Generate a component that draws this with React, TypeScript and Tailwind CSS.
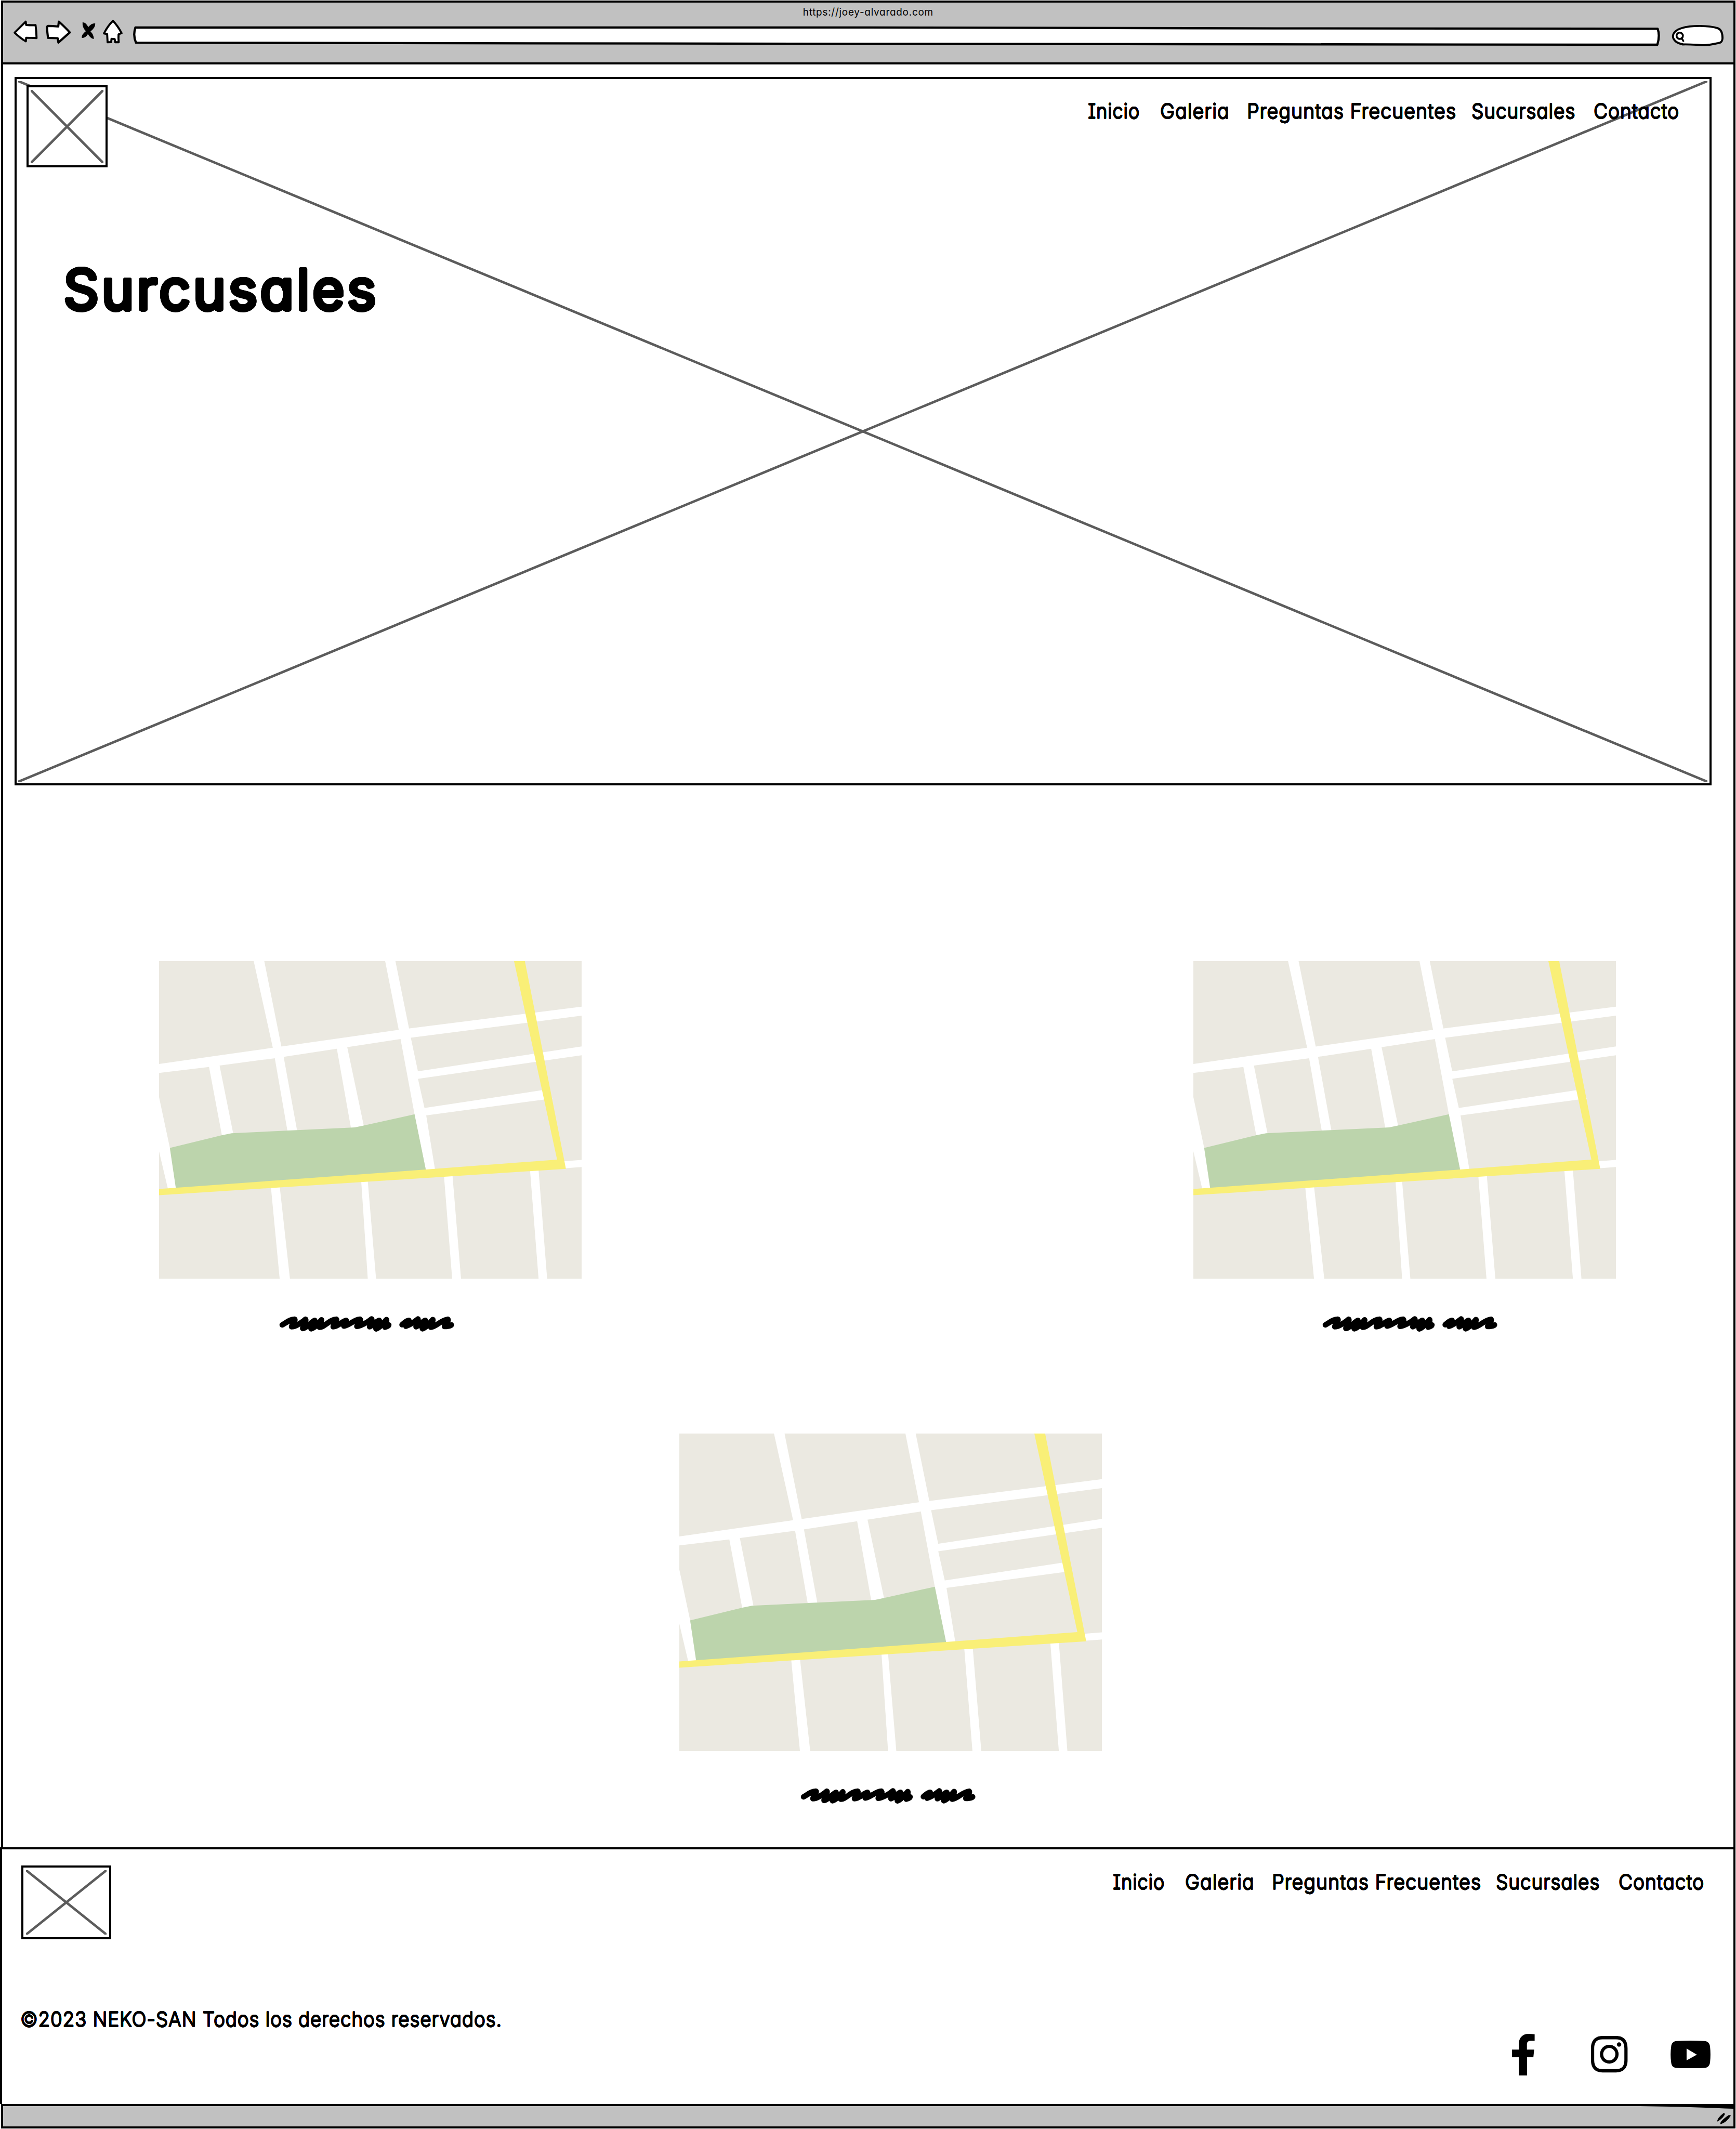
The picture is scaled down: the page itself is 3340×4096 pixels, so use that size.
import { useLayoutEffect, useRef, useState } from "react";
import type { ReactNode } from "react";

/* Soft outline of the given radius, which rounds the ends of the letter strokes. */
function roundShadow(radius: number) {
  const steps = 24;
  return Array.from({ length: steps }, (_, i) => {
    const a = (i / steps) * Math.PI * 2;
    return `${(Math.cos(a) * radius).toFixed(2)}px ${(Math.sin(a) * radius).toFixed(2)}px 0 #000`;
  }).join(",");
}

type FitProps = {
  width: number;
  bearing: number;
  tracking?: number;
  round?: number;
  className: string;
  children: ReactNode;
};

/* A single line of text, condensed to the given width. */
function FitText({ width, bearing, tracking = 0, round = 0, className, children }: FitProps) {
  const ref = useRef<HTMLSpanElement>(null);
  const [scale, setScale] = useState(1);
  useLayoutEffect(() => {
    if (ref.current) setScale(width / (ref.current.offsetWidth - bearing * 2 - tracking));
  }, [width, bearing, tracking]);
  return (
    <span className="block shrink-0 leading-none" style={{ width }}>
      <span
        ref={ref}
        className={`inline-block origin-left whitespace-nowrap align-top leading-none ${className}`}
        style={{
          letterSpacing: tracking,
          transform: `translateX(${-bearing * scale}px) scaleX(${scale})`,
          textShadow: round ? roundShadow(round) : undefined,
        }}
      >
        {children}
      </span>
    </span>
  );
}

function Cross({ className }: { className: string }) {
  return (
    <svg className={className} viewBox="0 0 100 100" preserveAspectRatio="none" fill="none" stroke="#5c5c5c" strokeWidth="4.8">
      <path d="M0 0L100 100" vectorEffect="non-scaling-stroke" />
      <path d="M100 0L0 100" vectorEffect="non-scaling-stroke" />
    </svg>
  );
}

const links = [
  { label: "Inicio", width: 95, gap: "mr-[44px]" },
  { label: "Galeria", width: 128.6, gap: "mr-[38.3px]" },
  { label: "Preguntas Frecuentes", width: 398.6, gap: "mr-[32.8px]" },
  { label: "Sucursales", width: 195.7, gap: "mr-[39.9px]" },
  { label: "Contacto", width: 159.8, gap: "" },
];

function Nav({ className }: { className: string }) {
  return (
    <nav className={`flex ${className}`}>
      {links.map((l) => (
        <a key={l.label} className={l.gap}>
          <FitText width={l.width} bearing={2} tracking={1} round={0.6} className="text-[39px] font-light">
            {l.label}
          </FitText>
        </a>
      ))}
    </nav>
  );
}

function Toolbar() {
  return (
    <header className="ml-[2px] mt-[1px] flex h-[123px] w-[3336.5px] shrink-0 flex-col border-4 border-black bg-[#c1c1c1]">
      <div className="flex h-[31px] justify-center pr-[1px] pt-[7.5px]">
        <FitText width={248} bearing={1.3} tracking={0.8} className="text-[20px]">
          https://joey-alvarado.com
        </FitText>
      </div>
      <div className="flex items-start pl-[19px]">
        <svg className="h-[50px] w-[49px]" viewBox="90 130 176 180" fill="#fff" stroke="#000" strokeWidth="14" strokeLinejoin="round">
          <path d="M101 227L178 150L181 173Q220 176 246 174Q252 215 253 264Q215 262 181 262L179 287Q140 265 101 227Z" />
        </svg>
        <svg className="ml-[12.8px] h-[50px] w-[50.7px]" viewBox="312 130 182 180" fill="#fff" stroke="#000" strokeWidth="15" strokeLinejoin="round">
          <path d="M330 180Q365 180 402 184L406 150Q450 190 482 225L403 295L398 265L331 263Q326 225 324 186Z" />
        </svg>
        <svg className="ml-[18.4px] h-[50px] w-[29px]" viewBox="560 130 104 180">
          <path d="M570 155Q592 154 610 188Q634 158 658 163Q660 190 625 218Q648 240 648 270Q630 271 607 237Q588 266 565 263Q561 240 593 216Q567 192 570 155Z" />
        </svg>
        <svg className="ml-[12.2px] h-[50px] w-[40px]" viewBox="708 130 144 180" fill="#fff" stroke="#000" strokeWidth="14" strokeLinejoin="round">
          <path d="M781 145Q815 180 841 230L820 238Q818 265 821 293L797 293L793 271L771 269L769 292L744 293L741 237L719 232Q745 180 781 145Z" />
        </svg>
        <svg className="ml-[19px] mt-[14px] h-[38px] w-[2937px] shrink-0 overflow-visible" viewBox="0 0 2938 38" preserveAspectRatio="none" fill="#fff" stroke="#000" strokeWidth="4.3" strokeLinejoin="round">
          <path d="M4.5 3L1414 2.9L2200 4.6L2934.3 5.4Q2939 18 2933.7 36L1414 34.3L5.6 32.1Q-.5 18 4.5 3Z" />
        </svg>
        <svg className="ml-[22px] mt-[10px] h-[44.5px] w-[103px] shrink-0" viewBox="460 165 370 160" fill="#fff" stroke="#000" strokeWidth="14" strokeLinejoin="round" strokeLinecap="round">
          <path d="M540 305C505 300 473 280 473 249C478 195 570 179 660 179C710 180 755 185 784 195C808 205 816 235 816 263C815 280 810 290 800 294C760 305 730 312 680 312C630 310 590 305 540 307Z" />
          <circle cx="520" cy="247" r="22" strokeWidth="13" />
          <path d="M534 265L545 283" strokeWidth="13" />
        </svg>
      </div>
    </header>
  );
}

function Hero() {
  return (
    <section className="relative ml-[22px] mt-[24px] h-[1363px] w-[3265px] border-4 border-black">
      <Cross className="absolute left-[3px] top-[3.5px] h-[1348px] w-[3250px]" />
      <div className="relative flex items-start justify-between">
        <div className="relative ml-[19px] mt-[12px] h-[158px] w-[156px] border-4 border-black bg-white">
          <Cross className="absolute left-[4px] top-[4.5px] h-[141px] w-[140px]" />
        </div>
        <Nav className="mr-[61px] mt-[42px]" />
      </div>
      <h1 className="relative ml-[96px] mt-[181px]">
        <FitText width={590} bearing={6} tracking={5} round={3.5} className="text-[108px] font-normal">
          Surcusales
        </FitText>
      </h1>
    </section>
  );
}

function StreetMap() {
  return (
    <svg className="block h-[611px] w-[813px]" viewBox="40 42 1482 1275" preserveAspectRatio="none">
      <path fill="#ebe9e1" d="M40 42H1522V1317H40Z" />
      <g fill="#fff">
        <path d="M40 455L439 390L880 318L1330 253L1522 225V261L1330 290L887 355L446 432L215 467L40 491Z" />
        <path d="M372 42H409L469 385L476 420L524 722H490L446 432L439 390Z" />
        <path d="M833 42H869L917 314L924 355L948 485V514L971 632L977 662L1008 880L976 882L936 657L887 355Z" />
        <path d="M215 465L252 460L300 734L261 745Z" />
        <path d="M663 390L699 382L758 703L713 712Z" />
        <path d="M946 485L1360 413L1522 385V420L1360 447L946 515Z" />
        <path d="M970 632L1385 560L1420 594L1390 598L976 662Z" />
        <path d="M40 588L78 792L100 960L110 976L76 979L71 956L40 806Z" />
        <path d="M1460 846L1522 840V869L1460 874Z" />
        <path d="M432 945H463L499 1317H463Z" />
        <path d="M749 925H772L801 1317H772Z" />
        <path d="M1039 900H1069L1099 1317H1068Z" />
        <path d="M1341 880H1371L1401 1317H1371Z" />
      </g>
      <path fill="#bcd4ac" d="M78 792L261 741L295 733L728 710L936 657L976 882L99 954Z" />
      <path fill="#f9ef77" d="M40 957L976 879L1436 839L1285 42H1323L1467 876L1040 908L40 982Z" />
    </svg>
  );
}

function Scribble({ className }: { className: string }) {
  return (
    <svg className={`block h-[30px] w-[337px] overflow-visible ${className}`} viewBox="73 66 1210 108" fill="none" stroke="#000" strokeWidth="38" strokeLinecap="round" strokeLinejoin="round">
      <path d="M93 127C130 105 150 88 178 88C190 92 160 120 158 140C190 140 225 110 255 88C262 100 235 130 235 152C260 150 290 110 318 96C325 110 285 140 293 154C320 150 350 110 365 92C372 105 340 130 350 143C385 145 420 90 468 88C478 100 445 125 446 140C480 140 510 100 536 96C546 108 515 125 520 135C560 130 590 90 632 88C645 100 610 125 610 137C640 135 690 105 712 86C722 100 695 130 698 140C725 130 750 98 765 96C775 110 735 140 743 155C775 145 800 105 815 90C822 105 800 130 805 143C820 140 830 135 831 127" />
      <path d="M923 126C940 110 955 98 970 96C975 110 945 125 950 136C985 125 1015 100 1033 86C1040 100 1015 130 1020 140C1045 130 1070 98 1085 96C1092 110 1055 140 1064 154C1095 145 1120 105 1136 90C1142 105 1115 130 1122 143C1160 140 1190 95 1240 88C1250 100 1215 125 1217 138C1240 138 1262 135 1264 127" />
    </svg>
  );
}

function Branch({ captionClass }: { captionClass: string }) {
  return (
    <figure className="flex w-[813px] flex-col">
      <StreetMap />
      <figcaption className="pt-[71.5px]">
        <Scribble className={captionClass} />
      </figcaption>
    </figure>
  );
}

function Footer() {
  return (
    <footer className="h-[494px] w-[3339px] shrink-0 border-x-4 border-t-4 border-black">
      <div className="flex items-start justify-between">
        <div className="relative ml-[37px] mt-[31px] h-[142px] w-[173px] border-4 border-black">
          <Cross className="absolute left-[5px] top-[5px] h-[124px] w-[155px]" />
        </div>
        <Nav className="mr-[59.6px] mt-[43px]" />
      </div>
      <p className="ml-[37px] mt-[133.5px]">
        <FitText width={922} bearing={2} tracking={1} round={0.6} className="text-[39px] font-light">
          ©2023 NEKO-SAN Todos los derechos reservados.
        </FitText>
      </p>
      <div className="mr-[44.5px] mt-[9px] flex h-[80px] items-center justify-end">
        <svg className="h-[80px] w-[43.6px]" viewBox="178 138 141 288" preserveAspectRatio="none">
          <path d="M221 426V300H178V247H221V205C221 165 245 138 280 138Q300 138 319 141V186H295C277 186 271 197 271 212V247H316L311 300H272V426Z" />
        </svg>
        <svg className="ml-[108.4px] h-[70.2px] w-[70.4px]" viewBox="670 156 228 252" preserveAspectRatio="none">
          <path fillRule="evenodd" d="M742 156H826C876 156 898 186 898 240V324C898 378 872 408 826 408H742C696 408 670 378 670 324V240C670 186 696 156 742 156ZM742 179C708 179 690 198 690 240V324C690 366 708 385 742 385H826C861 385 878 366 878 324V240C878 198 861 179 826 179Z" />
          <path fillRule="evenodd" d="M784 217A58 65 0 1 1 784 347A58 65 0 1 1 784 217ZM784 239A38 43 0 1 0 784 325A38 43 0 1 0 784 239Z" />
          <ellipse cx="845" cy="215" rx="13.5" ry="15" />
        </svg>
        <svg className="ml-[81.7px] h-[53.4px] w-[77px]" viewBox="1162 186 249 192" preserveAspectRatio="none">
          <path fillRule="evenodd" d="M1200 189Q1286 183 1373 189C1395 191 1406 206 1408 228Q1413 282 1408 336C1405 358 1395 373 1373 375Q1286 381 1200 375C1178 373 1168 360 1166 336Q1159 282 1166 228C1168 204 1178 191 1200 189ZM1262 241V323L1326 283Z" />
        </svg>
      </div>
    </footer>
  );
}

function StatusBar() {
  return (
    <div className="relative ml-[2px] flex h-[47px] w-[3336.5px] shrink-0 items-start justify-end border-4 border-black bg-[#c1c1c1] pr-[4px] pt-[13px]">
      <svg className="absolute right-0 top-[-1px] h-[6px] w-[180px]" viewBox="0 0 180 6">
        <path d="M0 0H180V6Q90 2 0 1Z" />
      </svg>
      <svg className="h-[21.7px] w-[26.3px]" viewBox="1452 684 85 78" preserveAspectRatio="none">
        <path d="M1452 742Q1450 722 1492 684L1500 690Q1494 715 1455 743Z" />
        <path d="M1471 761Q1466 742 1524 698L1537 702Q1510 750 1474 762Z" />
      </svg>
    </div>
  );
}

export default function App() {
  return (
    <div
      className="flex h-[4096px] w-[3340px] flex-col overflow-hidden bg-white text-black font-['Inter','Lato',sans-serif] [font-feature-settings:'cv11','cv08']"
    >
      <Toolbar />
      <main className="ml-[2px] flex h-[3430px] w-[3336.5px] shrink-0 flex-col border-x-4 border-black">
        <Hero />
        <section className="mt-[338px] flex justify-between pl-[300px] pr-[225.5px]">
          <Branch captionClass="ml-[231px]" />
          <Branch captionClass="ml-[247.5px]" />
        </section>
        <section className="mt-[196px] pl-[1300.5px]">
          <Branch captionClass="ml-[233px]" />
        </section>
      </main>
      <Footer />
      <StatusBar />
    </div>
  );
}
